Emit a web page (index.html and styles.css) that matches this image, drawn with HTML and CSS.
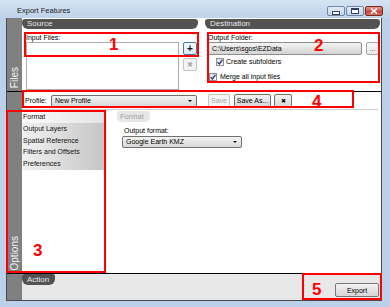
FILE: index.html
```html
<!DOCTYPE html>
<html lang="en">
<head>
    <meta charset="UTF-8">
    <meta name="viewport" content="width=device-width, initial-scale=1.0">
    <title>Export Features</title>
    <link rel="stylesheet" href="styles.css">
</head>
<body>
    <div class="window">
        <div class="titlebar">
            <span class="title">Export Features</span>
            <div class="caption">
                <span class="cap min"><i></i></span>
                <span class="cap max"><i></i></span>
                <span class="cap close">
                    <svg width="8" height="6" viewBox="0 0 8 6"><path d="M1 0.5 L7 5.5 M7 0.5 L1 5.5" stroke="#fff" stroke-width="1.6"/></svg>
                </span>
            </div>
        </div>

        <div class="client">
            <!-- Files -->
            <div class="band files-band">
                <div class="strip"><span class="vlabel">Files</span></div>
                <div class="files">
                    <section class="panel source">
                        <div class="tab">Source</div>
                        <div class="panel-body">
                            <div class="label">Input Files:</div>
                            <div class="input-row">
                                <div class="listbox"></div>
                                <div class="side-btns">
                                    <button class="btn icon add">+</button>
                                    <button class="btn icon disabled">&#x2716;</button>
                                </div>
                            </div>
                        </div>
                    </section>
                    <section class="panel dest">
                        <div class="tab">Destination</div>
                        <div class="panel-body">
                            <div class="label">Output Folder:</div>
                            <div class="folder-row">
                                <div class="field">C:\Users\sgos\EZData</div>
                                <button class="btn browse">...</button>
                            </div>
                            <label class="check sub"><span class="box"><svg width="6" height="6" viewBox="0 0 6 6"><path d="M0.6 3.2 L2.3 5 L5.4 0.8" fill="none" stroke="#24358a" stroke-width="1.3"/></svg></span>Create subfolders</label>
                            <label class="check merge"><span class="box"><svg width="6" height="6" viewBox="0 0 6 6"><path d="M0.6 3.2 L2.3 5 L5.4 0.8" fill="none" stroke="#24358a" stroke-width="1.3"/></svg></span>Merge all input files</label>
                        </div>
                    </section>
                </div>
            </div>

            <!-- Options -->
            <div class="band options-band">
                <div class="strip"><span class="vlabel">Options</span></div>
                <div class="options">
                    <div class="profile-bar">
                        <span class="profile-label">Profile:</span>
                        <div class="combo profile-combo">New Profile<span class="arrow"></span></div>
                        <button class="btn disabled save">Save</button>
                        <button class="btn save-as">Save As...</button>
                        <button class="btn del">&#x2716;</button>
                    </div>
                    <div class="sep"></div>
                    <div class="options-body">
                        <ul class="nav">
                            <li class="active">Format</li>
                            <li>Output Layers</li>
                            <li>Spatial Reference</li>
                            <li>Filters and Offsets</li>
                            <li>Preferences</li>
                        </ul>
                        <div class="page">
                            <div class="page-tab">Format</div>
                            <div class="page-label">Output format:</div>
                            <div class="combo format-combo">Google Earth KMZ<span class="arrow"></span></div>
                        </div>
                    </div>
                </div>
            </div>

            <!-- Action -->
            <div class="band action-band">
                <div class="strip"></div>
                <div class="action">
                    <div class="tab action-tab">Action</div>
                    <button class="btn export">Export</button>
                </div>
            </div>
        </div>

        <!-- annotation marks -->
        <div class="mark m1"></div>
        <div class="mark m2"></div>
        <div class="mark m3"></div>
        <div class="mark m4"></div>
        <div class="mark m5"></div>
        <span class="num n1">1</span>
        <span class="num n2">2</span>
        <span class="num n3">3</span>
        <span class="num n4">4</span>
        <span class="num n5">5</span>
    </div>
</body>
</html>
```
FILE: styles.css
```css
body {
    margin: 0;
    font-family: "Liberation Sans", Arial, sans-serif;
    font-size: 7px;
    color: #000;
}
.window {
    position: relative;
    width: 390px;
    height: 307px;
    overflow: hidden;
    background: #bcd1e9; /* window frame */
}

/* title bar */
.titlebar {
    height: 18px;
    display: flex;
    align-items: flex-start;
    background: linear-gradient(#d5e3f3, #bed2ea);
}
.title {
    margin: 7px 0 0 17px;
    line-height: 8px;
    font-size: 7.5px;
    color: #1a1a1a;
}
.caption {
    margin: 6px 7px 0 auto;
    display: flex;
    gap: 1px;
}
.cap {
    width: 18px;
    height: 10px;
    box-sizing: border-box;
    border: 1px solid #6f86a6;
    border-radius: 2px;
    background: linear-gradient(#e3edf8, #c3d5eb);
    display: flex;
    align-items: center;
    justify-content: center;
}
.cap.min i {
    width: 6px;
    height: 2px;
    margin-top: 3px;
    background: #fff;
    border: 1px solid #34435a;
}
.cap.max i {
    width: 6px;
    height: 3px;
    border: 1px solid #34435a;
    border-top-width: 2px;
    background: #fff;
}
.cap.close {
    border-color: #7a2a22;
    background: linear-gradient(#e5958a, #c5473a 60%, #d8705f);
}

/* client area */
.client {
    margin-left: 6px;
    width: 376px;
    height: 283px;
    box-sizing: border-box;
    border: 1px solid #4a4a4a;
    border-top: none;
    background: #fff;
    display: flex;
    flex-direction: column;
}
.band {
    display: flex;
    box-sizing: border-box;
}
.strip {
    width: 15px;
    flex: none;
    background: #808080;
    display: flex;
    align-items: flex-end;
    justify-content: center;
    padding-bottom: 3px;
    box-sizing: border-box;
}
.vlabel {
    writing-mode: vertical-rl;
    transform: rotate(180deg);
    color: #f2f2f2;
    font-size: 10px;
    line-height: 14px;
}

/* files */
.files-band {
    height: 74px;
    border-bottom: 1px solid #000;
}
.files {
    flex: 1;
    display: flex;
    gap: 7px;
    padding: 1px 1px 0 0;
}
.panel.source { width: 176px; }
.panel.dest { width: 175px; }
.tab {
    height: 10px;
    line-height: 10px;
    padding-left: 5px;
    font-size: 8px;
    color: #e8e8e8;
    background: #535353;
    border-radius: 3px 3px 6px 6px;
}
.panel-body {
    padding: 5px 0 0 4px;
}
.dest .panel-body { padding-left: 3px; }
.label {
    line-height: 8px;
    height: 8px;
}
.input-row {
    display: flex;
    gap: 4px;
}
.listbox {
    width: 153px;
    height: 48px;
    box-sizing: border-box;
    border: 1px solid #abadb3;
    background: #fff;
}
.side-btns {
    display: flex;
    flex-direction: column;
    gap: 3px;
}

/* buttons */
.btn {
    font-family: inherit;
    font-size: 7px;
    color: #000;
    padding: 0;
    box-sizing: border-box;
    border: 1px solid #707070;
    border-radius: 2px;
    background: linear-gradient(#f3f3f3, #e4e4e4 50%, #d6d6d6);
    cursor: pointer;
    line-height: 1;
}
.btn.disabled {
    color: #a8a8a8;
    border-color: #c2c4c6;
    background: #f4f4f4;
}
.btn.icon {
    width: 14px;
    height: 13px;
    font-size: 7px;
}
.btn.add {
    border-color: #3c7fb1;
    background: linear-gradient(#f4fafe, #d9edfa);
    font-size: 10px;
    font-weight: bold;
    color: #111;
}
.folder-row {
    display: flex;
    gap: 4px;
}
.field {
    width: 154px;
    height: 13px;
    box-sizing: border-box;
    border: 1px solid #8c8c8c;
    border-radius: 2px;
    background: linear-gradient(#f4f4f4, #e3e3e3 50%, #d4d4d4);
    padding-left: 3px;
    line-height: 11px;
}
.btn.browse {
    width: 13px;
    height: 13px;
    color: #555;
    border-color: #a9a9a9;
    background: linear-gradient(#f7f7f7, #e8e8e8);
}
.check {
    display: flex;
    align-items: center;
    height: 8px;
    line-height: 8px;
}
.check.sub {
    margin: 3px 0 0 8px;
    gap: 2px;
}
.check.merge {
    margin: 7px 0 0 1px;
    gap: 3px;
}
.box {
    width: 8px;
    height: 8px;
    box-sizing: border-box;
    border: 1px solid #8e8f8f;
    background: linear-gradient(#dcdcdc, #fff);
    display: flex;
    align-items: center;
    justify-content: center;
}

/* options */
.options-band {
    height: 182px;
    border-bottom: 1px solid #000;
}
.options {
    flex: 1;
    display: flex;
    flex-direction: column;
}
.profile-bar {
    height: 17px;
    display: flex;
    align-items: center;
    padding-left: 3px;
}
.profile-label {
    width: 26px;
}
.combo {
    position: relative;
    height: 12px;
    box-sizing: border-box;
    border: 1px solid #707070;
    border-radius: 2px;
    background: linear-gradient(#f3f3f3, #e6e6e6 50%, #d8d8d8);
    padding-left: 3px;
    line-height: 10px;
}
.arrow {
    position: absolute;
    right: 4px;
    top: 4px;
    border: 2px solid transparent;
    border-top: 2px solid #000;
    border-bottom: none;
}
.profile-combo {
    width: 146px;
}
.profile-bar .btn {
    height: 14px;
}
.btn.save {
    width: 22px;
    margin-left: 11px;
}
.btn.save-as {
    width: 37px;
    margin-left: 4px;
}
.btn.del {
    width: 18px;
    margin-left: 3px;
    font-size: 6px;
}
.sep {
    height: 1px;
    margin-right: 3px;
    background: #cfcfcf;
}
.options-body {
    flex: 1;
    display: flex;
}
.nav {
    list-style: none;
    margin: 1px 0 0;
    padding: 0;
    width: 83px;
    align-self: flex-start;
    background: linear-gradient(to right, #f1f1f1, #c5c5c5);
}
.nav li {
    height: 11.75px;
    line-height: 11.75px;
    padding-left: 1px;
    color: #111;
}
.nav li.active {
    background: linear-gradient(to right, #fbfbfb, #e4e4e4);
}
.page {
    flex: 1;
    padding-left: 12px;
}
.page-tab {
    width: 33px;
    height: 11px;
    line-height: 11px;
    margin-top: 1px;
    box-sizing: border-box;
    padding-left: 3px;
    color: #a4a4a4;
    font-size: 7.5px;
    background: #e6e6e6;
    border-radius: 2px 2px 5px 5px;
}
.page-label {
    margin: 5px 0 0 7px;
    line-height: 8px;
}
.format-combo {
    width: 120px;
    margin: 1px 0 0 5px;
}

/* action */
.action-band {
    flex: 1;
}
.action {
    flex: 1;
    display: flex;
    align-items: flex-start;
    background: #e8e8e8;
}
.action-tab {
    width: 33px;
    height: 11px;
    line-height: 11px;
    box-sizing: border-box;
    border-radius: 2px 2px 6px 6px;
}
.btn.export {
    width: 44px;
    height: 14px;
    margin: 9px 2px 0 auto;
    border-color: #777;
}

/* annotation marks */
.mark {
    position: absolute;
    box-sizing: border-box;
    border: 2px solid #f00;
}
.m1 { left: 24px; top: 32px; width: 175px; height: 25px; }
.m2 { left: 207px; top: 32px; width: 173px; height: 51px; }
.m3 { left: 6px; top: 110px; width: 100px; height: 163px; }
.m4 { left: 22px; top: 90px; width: 332px; height: 18px; }
.m5 { left: 302px; top: 273px; width: 80px; height: 27px; }
.num {
    position: absolute;
    color: #f00;
    font-size: 17px;
    line-height: 17px;
    font-weight: bold;
}
.n1 { left: 109px; top: 36px; }
.n2 { left: 314px; top: 37px; }
.n3 { left: 33px; top: 242px; }
.n4 { left: 312px; top: 93px; }
.n5 { left: 312px; top: 281px; }
```
